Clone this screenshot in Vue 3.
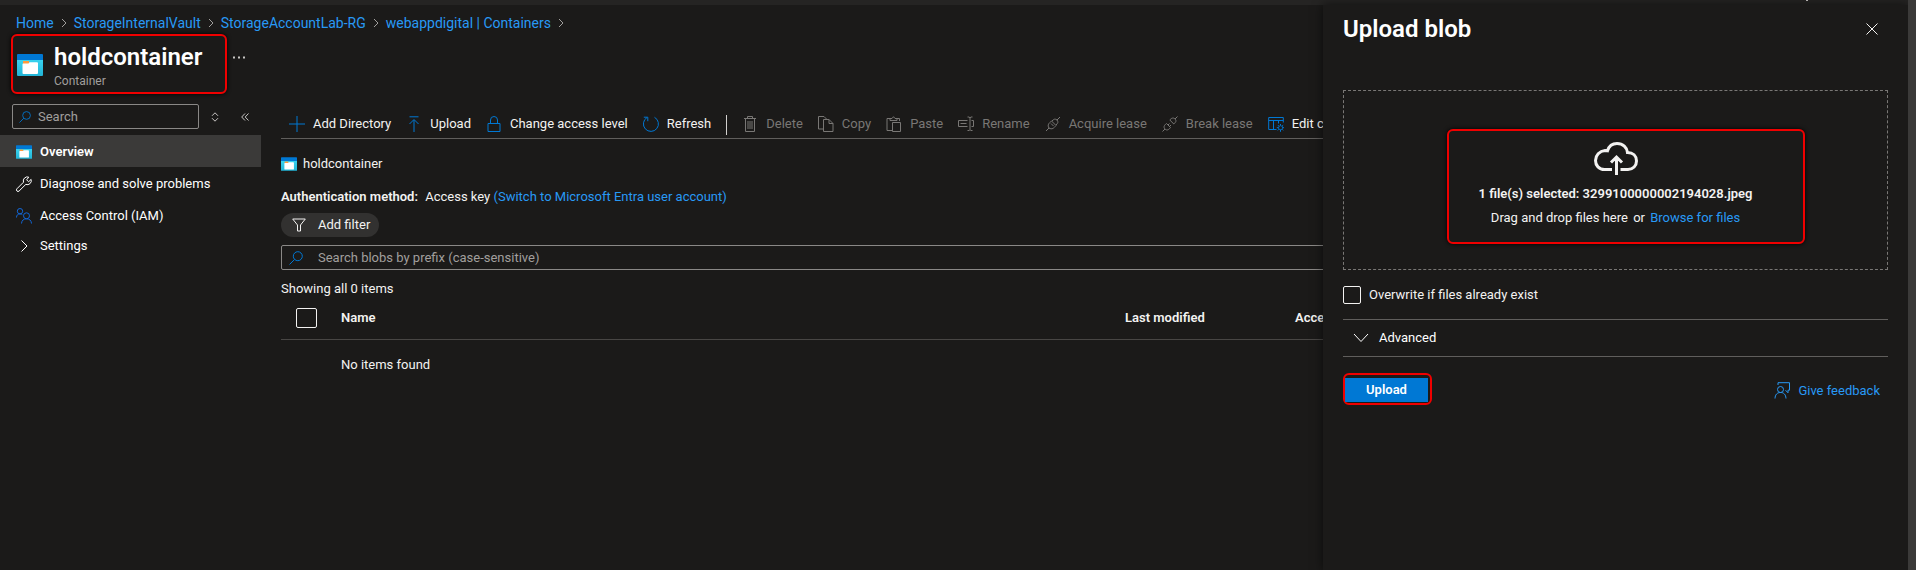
<template>
  <div class="portal">
    <div class="shell">
      <div class="top-strip"><span class="strip-mark"></span></div>

      <nav class="breadcrumb">
        <template v-for="crumb in crumbs" :key="crumb">
          <a href="#">{{ crumb }}</a>
          <svg width="6" height="10" viewBox="0 0 6 10"><path d="M1 1l4 4-4 4" /></svg>
        </template>
      </nav>

      <header class="blade-header">
        <div class="title-box">
          <svg class="container-icon" viewBox="0 0 26 22">
            <use href="#container-glyph" />
          </svg>
          <div>
            <h1>holdcontainer</h1>
            <p>Container</p>
          </div>
        </div>
        <button class="more" aria-label="More">
          <svg width="12" height="3" viewBox="0 0 12 3"><path d="M0 .5h2v2H0zM5 .5h2v2H5zM10 .5h2v2h-2z" /></svg>
        </button>
      </header>

      <div class="body">
        <!-- left menu -->
        <aside class="menu">
          <div class="menu-search">
            <label class="search-field">
              <svg class="blue" width="12" height="12" viewBox="0 0 14 14"><circle cx="8.8" cy="5.2" r="4.5" /><path d="M5.6 8.4L.5 13.5" /></svg>
              <input v-model="menuFilter" type="text" placeholder="Search" aria-label="Search" />
            </label>
            <button aria-label="Expand or collapse all">
              <svg width="8" height="10" viewBox="0 0 8 10"><path d="M1 3.800L4 .8l3 3M1 6.200l3 3 3-3" /></svg>
            </button>
            <button aria-label="Collapse menu">
              <svg width="8" height="8" viewBox="0 0 8 8"><path d="M4 .5L.7 4 4 7.500M7.500.5L4.200 4l3.300 3.500" /></svg>
            </button>
          </div>
          <ul>
            <li class="active">
              <a href="#">
                <svg width="16" height="16" viewBox="0 -2 26 26"><use href="#container-glyph" /></svg>
                Overview
              </a>
            </li>
            <li>
              <a href="#">
                <svg width="16" height="16" viewBox="0 0 16 16"><path d="M12.800 1.200a4 4 0 0 0-5.300 5L.9 12.800a1.500 1.500 0 0 0 2.200 2.200l6.700-6.600a4 4 0 0 0 5.300-5l-2.500 2.400-2-2z" /></svg>
                Diagnose and solve problems
              </a>
            </li>
            <li>
              <a href="#">
                <svg class="people" width="16" height="16" viewBox="0 0 16 16"><circle cx="4" cy="3.200" r="2.700" /><path d="M.5 9.500C.5 7 2 5.900 4 5.900c1 0 1.800.3 2.400.8" /><circle cx="10.500" cy="7.800" r="3" /><path d="M5.500 15.500c.2-3 2-4.700 5-4.700s4.800 1.700 5 4.700" /></svg>
                Access Control (IAM)
              </a>
            </li>
            <li class="group">
              <a href="#">
                <svg width="16" height="16" viewBox="0 0 16 16"><path d="M5.500 2.500L11 8l-5.500 5.500" /></svg>
                Settings
              </a>
            </li>
          </ul>
        </aside>

        <!-- container contents -->
        <main>
          <div class="toolbar">
            <template v-for="cmd in commands" :key="cmd.label">
              <button :disabled="cmd.disabled">
                <svg width="16" height="16" viewBox="0 0 16 16"><path :d="cmd.icon" /></svg>
                {{ cmd.label }}
              </button>
              <span v-if="cmd.label === 'Refresh'" class="divider"></span>
            </template>
          </div>

          <div class="location">
            <svg width="16" height="14" viewBox="0 0 26 22"><use href="#container-glyph" /></svg>
            holdcontainer
          </div>
          <p class="auth">
            <b>Authentication method:</b> Access key
            <a href="#">(Switch to Microsoft Entra user account)</a>
          </p>
          <button class="filter">
            <svg width="14" height="14" viewBox="0 0 14 14"><path d="M.7 1h12.600L8.500 7v6h-3V7z" /></svg>
            Add filter
          </button>
          <label class="search-field blob-search">
            <svg class="blue" width="14" height="14" viewBox="0 0 14 14"><circle cx="8.800" cy="5.200" r="4.500" /><path d="M5.600 8.400L.5 13.500" /></svg>
            <input v-model="prefix" type="text" placeholder="Search blobs by prefix (case-sensitive)" aria-label="Search blobs by prefix" />
          </label>
          <p class="count">Showing all 0 items</p>

          <table>
            <thead>
              <tr>
                <th class="check"><input v-model="allSelected" type="checkbox" aria-label="Select all" /></th>
                <th class="name">Name</th>
                <th class="modified">Last modified</th>
                <th>Access tier</th>
              </tr>
            </thead>
            <tbody>
              <tr>
                <td></td>
                <td colspan="3">No items found</td>
              </tr>
            </tbody>
          </table>
        </main>
      </div>

      <!-- upload panel -->
      <section class="panel">
        <header>
          <h2>Upload blob</h2>
          <button aria-label="Close">
            <svg width="12" height="12" viewBox="0 0 12 12"><path d="M.5.5l11 11M11.500.5l-11 11" /></svg>
          </button>
        </header>

        <div class="dropzone">
          <div class="drop-box">
            <svg class="cloud" width="44" height="34" viewBox="0 0 44 34">
              <path d="M18 27.500H10.500C5 27.500 1.500 23.500 1.500 18.500S5.500 9 11 8.500c1.500 0 2.500.2 2.500.2C15 4 18.500 1.500 23 1.500c6 0 10 4 10.500 9 5.500 0 9 3.500 9 8.500 0 4.800-3.500 8.500-8.500 8.500h-7.500M22.500 33V15.500M17 20.500l5.500-5.500 5.500 5.500" />
            </svg>
            <p><b>1 file(s) selected: 3299100000002194028.jpeg</b></p>
            <p class="browse">Drag and drop files here <span>or</span> <a href="#">Browse for files</a></p>
          </div>
        </div>

        <label class="overwrite">
          <input v-model="overwrite" type="checkbox" />
          Overwrite if files already exist
        </label>

        <button class="advanced">
          <svg width="16" height="10" viewBox="0 0 16 10"><path d="M1 1l7 7.500L15 1" /></svg>
          Advanced
        </button>

        <footer>
          <div class="upload-box"><button>Upload</button></div>
          <a href="#">
            <svg width="16" height="17" viewBox="0 0 16 17"><circle cx="6.500" cy="7.500" r="3" /><path d="M1 16.500c.2-4 2.200-6 5.500-6s5.300 2 5.500 6M4 3V.7h11.500v7.500h-1.500v2.600L11.500 8.200" /></svg>
            Give feedback
          </a>
        </footer>
      </section>
    </div>
    <div class="scrollbar"></div>

    <svg class="defs" width="0" height="0">
      <defs>
        <linearGradient id="cyan" x1="0" y1="0" x2="0" y2="1">
          <stop offset="0" stop-color="#3ad4f0" />
          <stop offset="1" stop-color="#22b4d6" />
        </linearGradient>
        <g id="container-glyph" stroke="none">
          <path fill="url(#cyan)" d="M0 5h26v16a1 1 0 0 1-1 1H1a1 1 0 0 1-1-1z" />
          <path fill="#0078d4" d="M1 0h24a1 1 0 0 1 1 1v5H0V1a1 1 0 0 1 1-1z" />
          <path fill="#ff9a3c" d="M6 7h6v3H6z" />
          <path fill="#fff" d="M6 9.500h5.500l1-1.300H20a1 1 0 0 1 1 1V19a1 1 0 0 1-1 1H6.500a1 1 0 0 1-1-1v-9z" />
        </g>
      </defs>
    </svg>
  </div>
</template>

<script setup>
import { ref } from 'vue'

const menuFilter = ref('')
const prefix = ref('')
const allSelected = ref(false)
const overwrite = ref(false)

const crumbs = ['Home', 'StorageInternalVault', 'StorageAccountLab-RG', 'webappdigital | Containers']

const commands = [
  { label: 'Add Directory', icon: 'M8 0v16M0 8h16' },
  { label: 'Upload', icon: 'M3.500 .8h9M8 16V4M3.500 8L8 3.500 12.500 8' },
  { label: 'Change access level', icon: 'M2 7.500h12v8H2zM4.500 7.500V4a3.500 3.500 0 0 1 7 0v3.500' },
  { label: 'Refresh', icon: 'M4 1.500A7.500 7.500 0 1 0 11.500 1.300M.8 1.200H4.800V5.200' },
  { label: 'Delete', disabled: true, icon: 'M2 2.500h12M5.500 2.500v-2h5v2M3.500 2.500v13h9v-13M6 5v8M8 5v8M10 5v8' },
  { label: 'Copy', disabled: true, icon: 'M5 13H.5V.5H6L8.500 3M5.500 3.500h5.500l4 4v8H5.500zM11 3.500v4h4' },
  { label: 'Paste', disabled: true, icon: 'M6 14.500H1v-12h3M11 2.500h2.500V5M4 4.500v-2h2L7.500.7 9 2.500h2v2zM6.500 6.500h8v9h-8z' },
  { label: 'Rename', disabled: true, icon: 'M9.500 4.500H.5v6h9M2.500 7.500h6M12 1.500v12M9.500 1h1.500l1 .8 1-.8h1.500M9.500 14.500h1.500l1-.8 1 .8h1.500M13.500 4.500h2v6h-2' },
  { label: 'Acquire lease', disabled: true, icon: 'M1 15l3-3M12 4l3-3M4 12c-2-3 0-5 2.500-7l4.500 4.500C9 12 7 14 4 12zM7 5c2-2 3-2.500 5-1 1.500 2 1 3 -1 5M6 7.500l2.500 2.500' },
  { label: 'Break lease', disabled: true, icon: 'M.5 15.500l2.500-2.500M13 3l2.500-2.500M3 13c-2-2-.5-4 1.500-5.500L8.500 11.500C7 13.500 5 15 3 13zM13 3c-2-2-4-.5-5.200 1l4 4C13.500 6.500 15 5 13 3zM6 9l1.500-1.500M7.500 10.500L9 9' },
  { label: 'Edit columns', icon: 'M8.500 13.500H.7V1.500h14.600v5M.7 4.500h14.600M5.500 4.500v9M10.500 4.500v3M12.500 9.700a2 2 0 1 0 .1 0M12.500 8v1.500M12.500 14v1.800M8.800 11.700h1.500M14.700 11.700h1.300M10 9.200l1 1M14 13.200l1.200 1.200M15.200 9.200l-1.200 1M11 13.200l-1.200 1.200' }
]
</script>

<style>
html,
body {
  background: #fff;
}
</style>

<style scoped>
.portal {
  display: flex;
  min-height: 100vh;
  padding-right: 11px;
  font-family: Roboto, "Open Sans", sans-serif;
  font-size: 13px;
  line-height: 20px;
  color: #f3f2f1;
}
.shell {
  position: relative;
  flex: 1;
  min-width: 0;
  overflow: hidden;
  background: #1b1a19;
}
.scrollbar {
  width: 8px;
  background: #3b3a39;
}
.defs {
  position: absolute;
}
svg {
  flex: none;
  fill: none;
  stroke: currentColor;
}
h1,
h2,
p,
ul {
  margin: 0;
  padding: 0;
}
b,
th {
  font-weight: 600;
}
a {
  color: #2899f5;
  text-decoration: none;
}
button,
input {
  font: inherit;
  color: inherit;
}
button {
  display: flex;
  align-items: center;
  padding: 0;
  border: none;
  background: none;
  white-space: nowrap;
}
input[type='checkbox'] {
  appearance: none;
  margin: 0;
  border: 1px solid #f3f2f1;
  border-radius: 2px;
}
.top-strip {
  display: flex;
  justify-content: flex-end;
  height: 5px;
  padding-right: 100px;
  background: #252423;
}
.strip-mark {
  width: 2px;
  height: 1px;
  background: #c8c6c4;
}
.breadcrumb {
  display: flex;
  align-items: center;
  gap: 7px;
  padding: 8px 16px 0;
  font-size: 14px;
}
.breadcrumb svg {
  color: #a19f9d;
}
.blade-header {
  display: flex;
  align-items: flex-start;
  padding: 1px 11px 0;
}
.title-box {
  display: flex;
  align-items: center;
  gap: 11px;
  box-sizing: border-box;
  width: 216px;
  height: 60px;
  padding: 2px 0 0 4px;
  border: 2px solid #f00000;
  border-radius: 6px;
  box-shadow: 0 0 4px #000;
}
.container-icon {
  width: 26px;
  height: 22px;
}
h1,
h2 {
  font-size: 24px;
  font-weight: 600;
  line-height: 32px;
  color: #fff;
}
.title-box p {
  font-size: 12px;
  line-height: 16px;
  color: #a19f9d;
}
.more {
  padding: 22px 6px;
}
.more svg {
  fill: #c8c6c4;
  stroke: none;
}
.body {
  display: flex;
  gap: 20px;
  padding-top: 10px;
}
.menu {
  flex: none;
  width: 261px;
}
.menu-search {
  display: flex;
  align-items: center;
  padding-left: 12px;
  color: #c8c6c4;
}
.menu-search button {
  margin-right: 12px;
  padding: 0 5px;
}
.search-field {
  display: flex;
  align-items: center;
  box-sizing: border-box;
  height: 25px;
  border: 1px solid #8a8886;
  border-radius: 2px;
}
.search-field input {
  flex: 1;
  min-width: 0;
  padding: 0;
  border: none;
  outline: none;
  background: none;
}
.search-field input::placeholder {
  color: #a19f9d;
  opacity: 1;
}
.menu-search .search-field {
  width: 187px;
  gap: 7px;
  margin-right: 7px;
  padding-left: 6px;
}
.blue {
  color: #0078d4;
}
.menu ul {
  padding-top: 6px;
  list-style: none;
}
.menu li a {
  display: flex;
  align-items: center;
  gap: 8px;
  box-sizing: border-box;
  height: 32px;
  padding: 2px 0 0 16px;
  color: #fff;
}
.menu .active a {
  background: #3b3a39;
  font-weight: 600;
}
.menu .group a {
  height: 28px;
}
.people {
  color: #1266d6;
}
main {
  flex: 1;
  min-width: 0;
}
.toolbar {
  display: flex;
  gap: 15px;
  height: 34px;
  padding-left: 8px;
  border-bottom: 1px solid #605e5c;
}
.toolbar button {
  gap: 8px;
  height: 40px;
}
.toolbar button svg {
  color: #0078d4;
}
.toolbar button:disabled,
.toolbar button:disabled svg {
  color: #797775;
}
.divider {
  width: 1px;
  height: 20px;
  margin-top: 11px;
  background: #d2d0ce;
}
.location {
  display: flex;
  align-items: center;
  gap: 6px;
  padding-top: 15px;
}
.auth {
  padding-top: 13px;
}
.auth b {
  margin-right: 4px;
}
.filter {
  gap: 12px;
  height: 24px;
  margin-top: 6px;
  padding: 0 9px 0 11px;
  border-radius: 12px;
  background: #323130;
}
.blob-search {
  gap: 15px;
  margin-top: 8px;
  padding-left: 7px;
}
.count {
  padding-top: 9px;
}
table {
  width: 100%;
  border-collapse: collapse;
  table-layout: fixed;
  text-align: left;
}
th {
  height: 38px;
  padding: 0 0 2px;
  border-bottom: 1px solid #484644;
}
td {
  height: 50px;
  padding: 0;
}
th input {
  display: block;
  width: 21px;
  height: 20px;
}
th.check {
  width: 45px;
  padding-left: 15px;
}
.name {
  width: 784px;
}
.modified {
  width: 170px;
}
.panel {
  position: absolute;
  top: 5px;
  right: 0;
  bottom: 0;
  box-sizing: border-box;
  width: 585px;
  padding: 8px 20px 0;
  background: #1b1a19;
  box-shadow: 0 0 10px rgba(0, 0, 0, 0.6);
}
.panel header {
  display: flex;
  align-items: center;
  justify-content: space-between;
  padding-right: 10px;
}
.dropzone {
  display: flex;
  align-items: center;
  justify-content: center;
  box-sizing: border-box;
  height: 180px;
  margin-top: 45px;
  padding: 12px 0 0 20px;
  border: 1px dashed #797775;
}
.drop-box {
  display: flex;
  flex-direction: column;
  align-items: center;
  box-sizing: border-box;
  width: 358px;
  height: 115px;
  padding: 11px 20px 0 0;
  border: 2px solid #f00000;
  border-radius: 6px;
  box-shadow: 0 0 4px #000;
}
.cloud {
  margin-bottom: 8px;
  stroke-width: 3;
}
.browse {
  margin-top: 4px;
}
.browse span {
  margin: 0 2px;
}
.overwrite {
  display: flex;
  align-items: center;
  gap: 8px;
  padding-top: 15px;
}
.overwrite input {
  width: 18px;
  height: 18px;
}
.advanced {
  gap: 10px;
  width: 100%;
  height: 38px;
  margin-top: 14px;
  padding-left: 10px;
  border-top: 1px solid #605e5c;
  border-bottom: 1px solid #605e5c;
  color: #fff;
}
.panel footer {
  display: flex;
  align-items: center;
  justify-content: space-between;
  padding-top: 16px;
}
.panel footer a {
  display: flex;
  align-items: center;
  gap: 8px;
  padding: 3px 8px 0 0;
}
.upload-box {
  box-sizing: border-box;
  width: 89px;
  height: 32px;
  padding: 3px 2px 0 0;
  border: 2px solid #f00000;
  border-radius: 6px;
}
.upload-box button {
  justify-content: center;
  width: 100%;
  height: 24px;
  background: #0078d4;
  color: #fff;
  font-weight: 600;
}
</style>
